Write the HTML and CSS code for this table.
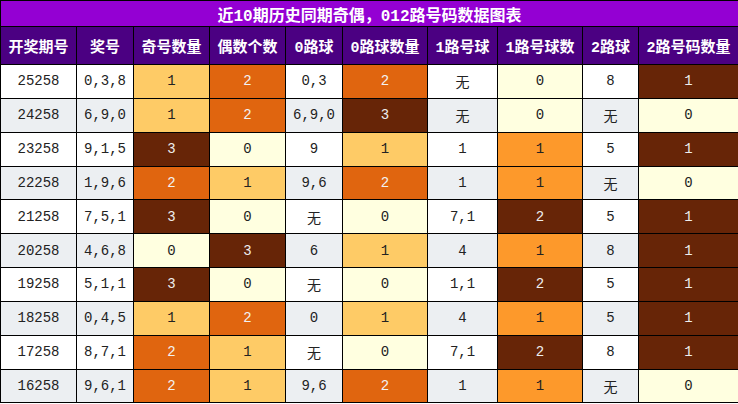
FILE: index.html
```html
<!DOCTYPE html>
<html lang="zh">
<head>
<meta charset="utf-8">
<link rel="stylesheet" href="styles.css">
</head>
<body>
<table class="tbl">
  <colgroup>
    <col class="c1"><col class="c2"><col class="c3"><col class="c4"><col class="c5">
    <col class="c6"><col class="c7"><col class="c8"><col class="c9"><col class="c10">
  </colgroup>
  <thead>
    <tr class="title-row"><th colspan="10">近10期历史同期奇偶，012路号码数据图表</th></tr>
    <tr class="head-row">
      <th>开奖期号</th><th>奖号</th><th>奇号数量</th><th>偶数个数</th><th>0路球</th>
      <th>0路球数量</th><th>1路号球</th><th>1路号球数</th><th>2路球</th><th>2路号码数量</th>
    </tr>
  </thead>
  <tbody>
    <tr><td>25258</td><td>0,3,8</td><td class="lo">1</td><td class="do">2</td><td>0,3</td><td class="do">2</td><td>无</td><td class="ly">0</td><td>8</td><td class="br">1</td></tr>
    <tr class="alt"><td>24258</td><td>6,9,0</td><td class="lo">1</td><td class="do">2</td><td>6,9,0</td><td class="br">3</td><td>无</td><td class="ly">0</td><td>无</td><td class="ly">0</td></tr>
    <tr><td>23258</td><td>9,1,5</td><td class="br">3</td><td class="ly">0</td><td>9</td><td class="lo">1</td><td>1</td><td class="or">1</td><td>5</td><td class="br">1</td></tr>
    <tr class="alt"><td>22258</td><td>1,9,6</td><td class="do">2</td><td class="lo">1</td><td>9,6</td><td class="do">2</td><td>1</td><td class="or">1</td><td>无</td><td class="ly">0</td></tr>
    <tr><td>21258</td><td>7,5,1</td><td class="br">3</td><td class="ly">0</td><td>无</td><td class="ly">0</td><td>7,1</td><td class="br">2</td><td>5</td><td class="br">1</td></tr>
    <tr class="alt"><td>20258</td><td>4,6,8</td><td class="ly">0</td><td class="br">3</td><td>6</td><td class="lo">1</td><td>4</td><td class="or">1</td><td>8</td><td class="br">1</td></tr>
    <tr><td>19258</td><td>5,1,1</td><td class="br">3</td><td class="ly">0</td><td>无</td><td class="ly">0</td><td>1,1</td><td class="br">2</td><td>5</td><td class="br">1</td></tr>
    <tr class="alt"><td>18258</td><td>0,4,5</td><td class="lo">1</td><td class="do">2</td><td>0</td><td class="lo">1</td><td>4</td><td class="or">1</td><td>5</td><td class="br">1</td></tr>
    <tr><td>17258</td><td>8,7,1</td><td class="do">2</td><td class="lo">1</td><td>无</td><td class="ly">0</td><td>7,1</td><td class="br">2</td><td>8</td><td class="br">1</td></tr>
    <tr class="alt"><td>16258</td><td>9,6,1</td><td class="do">2</td><td class="lo">1</td><td>9,6</td><td class="do">2</td><td>1</td><td class="or">1</td><td>无</td><td class="ly">0</td></tr>
  </tbody>
</table>
</body>
</html>
```

FILE: styles.css
```css
html, body {
  margin: 0;
  padding: 0;
  background: #ffffff;
}

.tbl {
  width: 738px;
  border-collapse: collapse;
  table-layout: fixed;
  font-family: "Liberation Mono", "Noto Sans CJK SC", monospace;
  font-size: 14px;
  color: #222222;
}

.c1 { width: 76px; }
.c2 { width: 57px; }
.c3 { width: 76px; }
.c4 { width: 76px; }
.c5 { width: 57px; }
.c6 { width: 85px; }
.c7 { width: 70px; }
.c8 { width: 85px; }
.c9 { width: 56px; }
.c10 { width: 100px; }

.tbl th,
.tbl td {
  border: 1px solid #000000;
  padding: 0;
  text-align: center;
  vertical-align: middle;
}

.title-row th {
  background: #9400d3;
  color: #ffffff;
  font-size: 16px;
  font-weight: bold;
  height: 25px;
}

.head-row th {
  background: #4b0082;
  color: #ffffff;
  font-size: 15px;
  font-weight: bold;
  height: 37px;
}

.tbl td {
  height: 32.85px;
  background: #ffffff;
}

.tbl tr.alt td {
  background: #eceff2;
}

.tbl td.ly, .tbl tr.alt td.ly { background: #ffffe0; color: #222222; }
.tbl td.lo, .tbl tr.alt td.lo { background: #fecb66; color: #222222; }
.tbl td.or, .tbl tr.alt td.or { background: #fd992b; color: #222222; }
.tbl td.do, .tbl tr.alt td.do { background: #e0650f; color: #f2f2f2; }
.tbl td.br, .tbl tr.alt td.br { background: #672507; color: #eeeeee; }
```
